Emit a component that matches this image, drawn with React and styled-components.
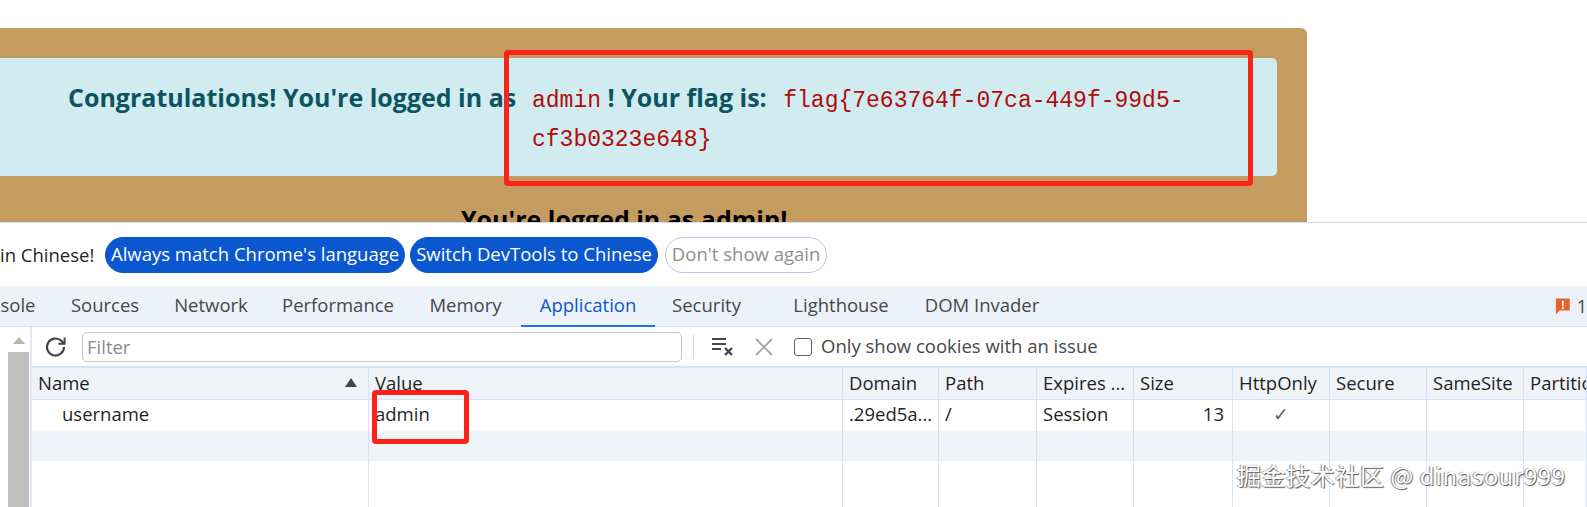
import React from "react";
import styled, { createGlobalStyle } from "styled-components";

const TABS = [
  { label: "sole", width: 54, flush: true },
  { label: "Sources", width: 102 },
  { label: "Network", width: 110 },
  { label: "Performance", width: 144 },
  { label: "Memory", width: 111 },
  { label: "Application", width: 134, active: true },
  { label: "Security", width: 103 },
  { label: "Lighthouse", width: 166 },
  { label: "DOM Invader", width: 116 },
];

const COLUMNS = "337px 474px 96px 98px 97px 99px 97px 97px 97px 1fr";
const HEADERS = ["Name", "Value", "Domain", "Path", "Expires ...", "Size", "HttpOnly", "Secure", "SameSite", "Partition"];

function App() {
  return (
    <Page>
      <GlobalStyle />
      <Site>
        <Panel>
          <Alert>
            <Lead>Congratulations! You're logged in as</Lead>
            <FlagBlock>
              <Code>admin</Code> ! Your flag is: <FlagCode>flag{"{"}7e63764f-07ca-449f-99d5-cf3b0323e648{"}"}</FlagCode>
            </FlagBlock>
          </Alert>
          <Logged>You're logged in as admin!</Logged>
        </Panel>
        <FlagMark />
      </Site>

      <Infobar>
        <InfoText>in Chinese!</InfoText>
        <Pill>Always match Chrome's language</Pill>
        <Pill>Switch DevTools to Chinese</Pill>
        <Pill $ghost>Don't show again</Pill>
      </Infobar>

      <TabBar>
        {TABS.map((tab) => (
          <Tab key={tab.label} $width={tab.width} $active={tab.active} $flush={tab.flush}>
            {tab.label}
          </Tab>
        ))}
        <Issues>
          <svg width="17" height="20" viewBox="0 0 17 20">
            <path d="M1 2h15v13H5l-4 4z" fill="#e8622c" />
            <rect x="7.6" y="4.5" width="1.8" height="6" fill="#fff" />
            <rect x="7.6" y="11.5" width="1.8" height="1.8" fill="#fff" />
          </svg>
          <span>1</span>
        </Issues>
      </TabBar>

      <Body>
        <Side>
          <ScrollArrow />
          <ScrollThumb />
        </Side>
        <Main>
          <Toolbar>
            <IconSlot>
              <svg width="24" height="24" viewBox="0 0 24 24" fill="none" stroke="#444746" strokeWidth="2.2">
                <path d="M20 12a8.5 8.5 0 1 1-2.6-6.1L20 8.4" />
                <path d="M20.6 2.6v6.2h-6.2" strokeWidth="2" />
              </svg>
            </IconSlot>
            <FilterBox>Filter</FilterBox>
            <Divider />
            <ClearIcon>
              <svg width="24" height="22" viewBox="0 0 24 22" fill="none" stroke="#444746" strokeWidth="2">
                <path d="M1 3h14M1 8h14M1 13h9" />
                <path d="M14 12l7 7M21 12l-7 7" strokeWidth="2.4" />
              </svg>
            </ClearIcon>
            <CloseIcon>
              <svg width="18" height="18" viewBox="0 0 18 18" fill="none" stroke="#a4a7a8" strokeWidth="1.8">
                <path d="M1 1l16 16M17 1L1 17" />
              </svg>
            </CloseIcon>
            <CheckBox />
            <CheckLabel>Only show cookies with an issue</CheckLabel>
          </Toolbar>

          <HeadRow>
            {HEADERS.map((h, i) => (
              <HeadCell key={h}>
                {h}
                {i === 0 && <SortArrow />}
              </HeadCell>
            ))}
          </HeadRow>

          <Row>
            <Cell $indent>username</Cell>
            <Cell>admin</Cell>
            <Cell>.29ed5a...</Cell>
            <Cell>/</Cell>
            <Cell>Session</Cell>
            <Cell $right>13</Cell>
            <Cell $center>✓</Cell>
            <Cell />
            <Cell />
            <Cell />
          </Row>
          <Row $striped>
            {HEADERS.map((h) => (
              <Cell key={h} />
            ))}
          </Row>
          <Row $fill>
            {HEADERS.map((h) => (
              <Cell key={h} />
            ))}
          </Row>
          <ValueMark />
        </Main>
      </Body>
      <Watermark>掘金技术社区 @ dinasour999</Watermark>
    </Page>
  );
}

export default App;

const GlobalStyle = createGlobalStyle`
  html, body {
    margin: 0;
    padding: 0;
    background: #fff;
  }
`;

const Page = styled.div`
  position: relative;
  display: flex;
  flex-direction: column;
  width: 1587px;
  height: 507px;
  overflow: hidden;
  background: #fff;
  font-family: "Open Sans", "Noto Sans", sans-serif;
  color: #1f1f1f;
`;

const Site = styled.div`
  position: relative;
  height: 222px;
  padding-top: 28px;
  box-sizing: border-box;
  overflow: hidden;
  flex: none;
`;

const Panel = styled.div`
  width: 1307px;
  height: 240px;
  padding: 30px 30px 0 0;
  box-sizing: border-box;
  background: #c49c5f;
  border-radius: 0 6px 0 0;
`;

const Alert = styled.div`
  display: flex;
  height: 118px;
  padding: 20px 30px 0 68px;
  box-sizing: border-box;
  background: #d1ecf1;
  border-radius: 0 5px 5px 0;
  color: #0c5460;
  font-size: 25px;
  font-weight: 700;
  line-height: 39px;
`;

const Lead = styled.div`
  width: 464px;
  flex: none;
  white-space: nowrap;
`;

const FlagBlock = styled.div`
  width: 680px;
`;

const Code = styled.span`
  font-family: "Liberation Mono", monospace;
  font-size: 23px;
  font-weight: 400;
  line-height: 1;
  color: #b30a0a;
`;

const FlagCode = styled(Code)`
  margin-left: 10px;
`;

const Logged = styled.div`
  margin-top: 28px;
  padding-left: 461px;
  font-size: 25px;
  font-weight: 700;
  line-height: 30px;
  color: #000;
`;

const FlagMark = styled.div`
  position: absolute;
  left: 504px;
  top: 50px;
  width: 749px;
  height: 136px;
  box-sizing: border-box;
  border: 5px solid #fb2317;
  border-radius: 4px;
`;

const Infobar = styled.div`
  display: flex;
  align-items: center;
  gap: 5px;
  height: 64px;
  flex: none;
  box-sizing: border-box;
  border-top: 1px solid #d6daf0;
`;

const InfoText = styled.span`
  width: 100px;
  font-size: 18.5px;
  white-space: nowrap;
`;

const Pill = styled.button`
  height: 36px;
  margin-left: ${(p) => (p.$ghost ? "2px" : "0")};
  padding: 0 ${(p) => (p.$ghost ? "6px" : "5px")} 2px;
  border-radius: 18px;
  font-family: inherit;
  font-size: 18.5px;
  white-space: nowrap;
  border: 1px solid ${(p) => (p.$ghost ? "#b9c6e6" : "#0b57d0")};
  background: ${(p) => (p.$ghost ? "#fff" : "#0b57d0")};
  color: ${(p) => (p.$ghost ? "#8f8f8f" : "#fff")};
`;

const TabBar = styled.div`
  display: flex;
  align-items: stretch;
  height: 41px;
  flex: none;
  box-sizing: border-box;
  background: #edf2fa;
  border-bottom: 1px solid #d3e3fd;
`;

const Tab = styled.div`
  width: ${(p) => p.$width}px;
  flex: none;
  display: flex;
  align-items: center;
  justify-content: center;
  box-sizing: border-box;
  padding-right: ${(p) => (p.$flush ? "18px" : "0")};
  padding-bottom: 2px;
  font-size: 18.5px;
  color: ${(p) => (p.$active ? "#0b57d0" : "#474747")};
  border-bottom: 2px solid ${(p) => (p.$active ? "#1a73e8" : "transparent")};
  margin-bottom: -1px;
`;

const Issues = styled.div`
  display: flex;
  align-items: center;
  gap: 6px;
  margin-left: auto;
  width: 32px;
  font-size: 18px;
  color: #474747;
`;

const Body = styled.div`
  display: flex;
  flex: 1;
  min-height: 0;
`;

const Side = styled.div`
  display: flex;
  flex-direction: column;
  align-items: center;
  width: 32px;
  flex: none;
  box-sizing: border-box;
  padding: 10px 1px 0 8px;
  border-right: 2px solid #e3e8f4;
`;

const ScrollArrow = styled.div`
  width: 0;
  height: 0;
  border-left: 6px solid transparent;
  border-right: 6px solid transparent;
  border-bottom: 7px solid #b4b4b4;
`;

const ScrollThumb = styled.div`
  flex: 1;
  align-self: stretch;
  margin-top: 8px;
  background: #bfbfbf;
`;

const Main = styled.div`
  position: relative;
  display: flex;
  flex-direction: column;
  flex: 1;
  min-width: 0;
`;

const Toolbar = styled.div`
  display: flex;
  align-items: center;
  height: 41px;
  flex: none;
  box-sizing: border-box;
  border-bottom: 2px solid #d3e3fd;
`;

const IconSlot = styled.div`
  display: flex;
  width: 50px;
  padding-left: 12px;
  box-sizing: border-box;
`;

const FilterBox = styled.div`
  width: 600px;
  height: 30px;
  box-sizing: border-box;
  padding-left: 4px;
  border: 1px solid #c4c7c5;
  border-radius: 5px;
  font-size: 18.5px;
  line-height: 27px;
  color: #8a8a8a;
`;

const Divider = styled.div`
  width: 1px;
  height: 24px;
  margin: 0 17px 0 11px;
  background: #c7d7ee;
`;

const ClearIcon = styled.div`
  display: flex;
  width: 44px;
`;

const CloseIcon = styled.div`
  display: flex;
  width: 39px;
`;

const CheckBox = styled.div`
  width: 18px;
  height: 18px;
  box-sizing: border-box;
  border: 1.5px solid #5f6368;
  border-radius: 3px;
`;

const CheckLabel = styled.span`
  margin-left: 9px;
  padding-bottom: 2px;
  font-size: 18.5px;
  color: #474747;
`;

const HeadRow = styled.div`
  display: grid;
  grid-template-columns: ${COLUMNS};
  height: 32px;
  flex: none;
  box-sizing: border-box;
  background: #f0f3f8;
  border-bottom: 1px solid #d3e3fd;
`;

const HeadCell = styled.div`
  position: relative;
  display: flex;
  align-items: center;
  justify-content: space-between;
  padding: 0 11px 2px 6px;
  font-size: 18.5px;
  white-space: nowrap;
  overflow: hidden;
  border-right: 1px solid #d8e2f5;
`;

const SortArrow = styled.span`
  width: 0;
  height: 0;
  border-left: 6px solid transparent;
  border-right: 6px solid transparent;
  border-bottom: 9px solid #444746;
`;

const Row = styled.div`
  display: grid;
  grid-template-columns: ${COLUMNS};
  height: ${(p) => (p.$striped ? "30px" : "31px")};
  flex: ${(p) => (p.$fill ? 1 : "none")};
  background: ${(p) => (p.$striped ? "#f0f3f8" : "#fff")};
`;

const Cell = styled.div`
  padding: 0 ${(p) => (p.$right ? "8px" : "6px")} 0 ${(p) => (p.$indent ? "30px" : "6px")};
  font-size: 18.5px;
  line-height: 28px;
  white-space: nowrap;
  color: ${(p) => (p.$center ? "#666" : "inherit")};
  text-align: ${(p) => (p.$right ? "right" : p.$center ? "center" : "left")};
  border-right: 1px solid #d8e2f5;
`;

const ValueMark = styled.div`
  position: absolute;
  left: 340px;
  top: 63px;
  width: 97px;
  height: 54px;
  box-sizing: border-box;
  border: 5px solid #fb2317;
  border-radius: 4px;
`;

const Watermark = styled.div`
  position: absolute;
  left: 1237px;
  top: 459px;
  font-family: "Noto Sans CJK SC", "Liberation Sans", sans-serif;
  font-size: 24px;
  line-height: 32px;
  letter-spacing: 0.6px;
  white-space: nowrap;
  color: #fff;
  text-shadow: 1px 1px 1px #555, -1px 0 1px #888;
`;
